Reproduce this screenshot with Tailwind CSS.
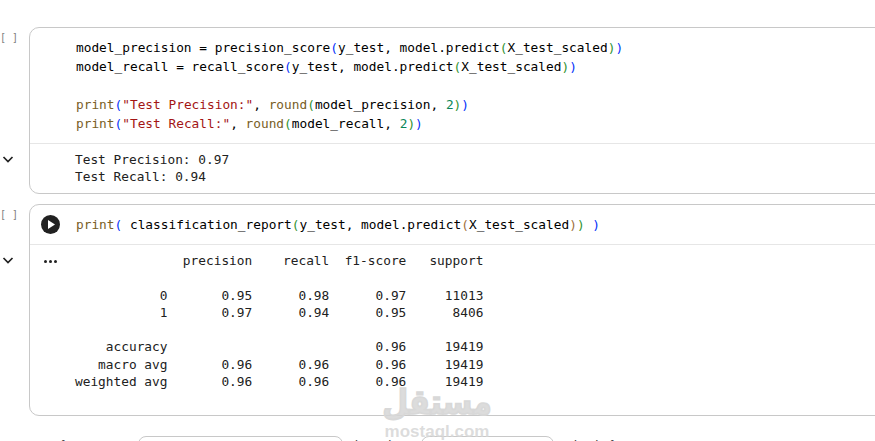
<!DOCTYPE html>
<html lang="en">
<head>
  <meta charset="UTF-8" />
  <title>Notebook</title>
  <script src="https://cdn.jsdelivr.net/npm/@tailwindcss/browser@4"></script>
</head>
<body class="bg-white h-[441px] overflow-hidden relative font-['DejaVu_Sans_Mono',monospace] text-[12.8px]">

  <div class="pt-[27px] flex flex-col gap-[10px]">

    <!-- Cell 1 -->
    <div class="flex">
      <div class="w-[29px] shrink-0 flex flex-col">
        <div class="h-[126px] pt-[5px] text-[10px] leading-[12px] text-[#808080] whitespace-pre">[ ]</div>
        <svg class="ml-[2px] w-3 h-3" viewBox="0 0 12 12" fill="none" stroke="#212121" stroke-width="1.7"><path d="M1.5 4 L6 8.5 L10.5 4"/></svg>
      </div>
      <div class="w-[860px] shrink-0 h-[167px] border border-[#c8c8c8] rounded-[10px]">
        <pre class="h-[115px] pl-[46px] pt-[10px] font-['DejaVu_Sans_Mono',monospace] text-[12.8px] leading-[19px] text-black">model_precision = precision_score<span class="text-[#0431fa]">(</span>y_test, model.predict<span class="text-[#319331]">(</span>X_test_scaled<span class="text-[#319331]">)</span><span class="text-[#0431fa]">)</span>
model_recall = recall_score<span class="text-[#0431fa]">(</span>y_test, model.predict<span class="text-[#319331]">(</span>X_test_scaled<span class="text-[#319331]">)</span><span class="text-[#0431fa]">)</span>

<span class="text-[#795e26]">print</span><span class="text-[#0431fa]">(</span><span class="text-[#a31515]">"Test Precision:"</span>, <span class="text-[#795e26]">round</span><span class="text-[#319331]">(</span>model_precision, <span class="text-[#098658]">2</span><span class="text-[#319331]">)</span><span class="text-[#0431fa]">)</span>
<span class="text-[#795e26]">print</span><span class="text-[#0431fa]">(</span><span class="text-[#a31515]">"Test Recall:"</span>, <span class="text-[#795e26]">round</span><span class="text-[#319331]">(</span>model_recall, <span class="text-[#098658]">2</span><span class="text-[#319331]">)</span><span class="text-[#0431fa]">)</span></pre>
        <div class="border-t border-[#e6e6e6]">
          <pre class="pl-[45px] pt-[7px] font-['DejaVu_Sans_Mono',monospace] text-[12.8px] leading-[17.2px] text-[#212121]">Test Precision: 0.97
Test Recall: 0.94</pre>
        </div>
      </div>
    </div>

    <!-- Cell 2 -->
    <div class="flex">
      <div class="w-[29px] shrink-0 flex flex-col">
        <div class="h-[50px] pt-[5px] text-[10px] leading-[12px] text-[#808080] whitespace-pre">[ ]</div>
        <svg class="ml-[2px] w-3 h-3" viewBox="0 0 12 12" fill="none" stroke="#212121" stroke-width="1.7"><path d="M1.5 4 L6 8.5 L10.5 4"/></svg>
      </div>
      <div class="w-[860px] shrink-0 h-[212px] border border-[#c8c8c8] rounded-[10px]">
        <div class="h-[39px] flex items-center">
          <svg class="ml-[11px] w-[19px] h-[19px] shrink-0" viewBox="0 0 19 19"><circle cx="9.5" cy="9.5" r="9.5" fill="#212121"/><path d="M7 5 L14 9.5 L7 14 Z" fill="#fff"/></svg>
          <pre class="ml-[16px] font-['DejaVu_Sans_Mono',monospace] text-[12.8px] leading-[19px] text-black"><span class="text-[#795e26]">print</span><span class="text-[#0431fa]">(</span> classification_report<span class="text-[#319331]">(</span>y_test, model.predict<span class="text-[#a0703c]">(</span>X_test_scaled<span class="text-[#a0703c]">)</span><span class="text-[#319331]">)</span> <span class="text-[#0431fa]">)</span></pre>
        </div>
        <div class="border-t border-[#e6e6e6] flex">
          <div class="ml-[14px] mt-[15px] flex gap-[2px] w-[31px] shrink-0">
            <span class="w-[3px] h-[3px] rounded-full bg-[#212121]"></span>
            <span class="w-[3px] h-[3px] rounded-full bg-[#212121]"></span>
            <span class="w-[3px] h-[3px] rounded-full bg-[#212121]"></span>
          </div>
          <pre class="pt-[7px] font-['DejaVu_Sans_Mono',monospace] text-[12.8px] leading-[17.3px] text-[#212121]">              precision    recall  f1-score   support

           0       0.95      0.98      0.97     11013
           1       0.97      0.94      0.95      8406

    accuracy                           0.96     19419
   macro avg       0.96      0.96      0.96     19419
weighted avg       0.96      0.96      0.96     19419</pre>
        </div>
      </div>
    </div>

    <!-- Form row cut off by the bottom edge -->
    <div class="mt-[10px] flex items-start font-['Roboto',sans-serif] text-[13px] leading-[16px] text-[#424242]">
      <span class="ml-[60px] w-[78px] shrink-0 mt-[2px]">for</span>
      <div class="w-[205px] h-[24px] shrink-0 border border-[#c8c8c8] rounded-[8px]"></div>
      <span class="w-[78px] shrink-0 pl-[12px] mt-[2px]">bound</span>
      <div class="w-[133px] h-[24px] shrink-0 border border-[#c8c8c8] rounded-[8px]"></div>
      <span class="pl-[20px] mt-[2px]">kind of</span>
    </div>
  </div>

  <!-- Watermark -->
  <div class="absolute left-[382px] top-[385px] w-[110px] flex flex-col items-center text-[#d6d6d6]/85 pointer-events-none">
    <span class="font-['DejaVu_Sans',sans-serif] font-bold text-[30px] leading-[36px] scale-y-[1.15] [-webkit-text-stroke:1.5px_#d8d8d8]">مستقل</span>
    <span class="font-['Liberation_Sans',sans-serif] font-bold text-[17px] leading-[18px] mt-[2px]">mostaql.com</span>
  </div>

</body>
</html>
